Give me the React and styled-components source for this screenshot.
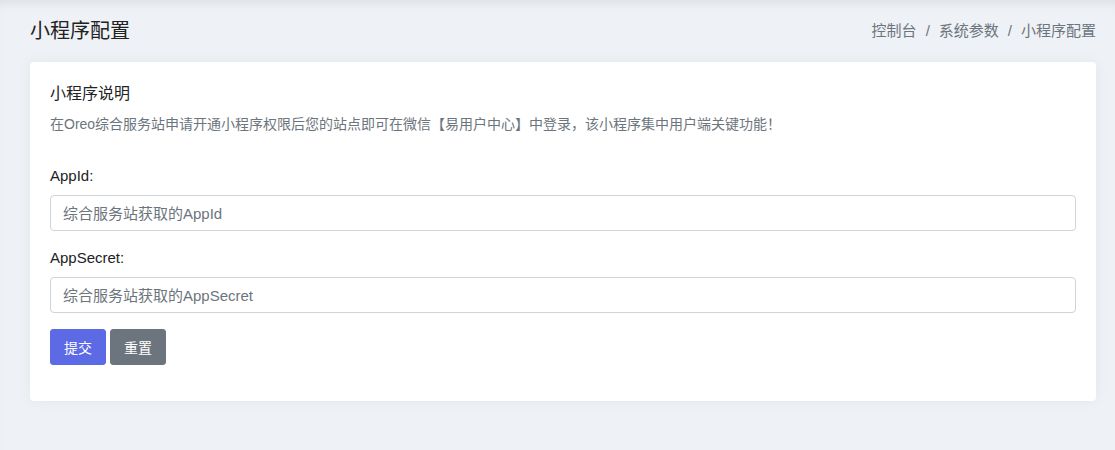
import React from 'react';
import styled, { createGlobalStyle } from 'styled-components';

const GlobalStyle = createGlobalStyle`
  html, body {
    margin: 0;
    padding: 0;
    background: #eef1f5;
  }
  body {
    font-family: "Liberation Sans", "Noto Sans CJK SC", sans-serif;
    color: #212529;
  }
  * {
    box-sizing: border-box;
  }
`;

const Page = styled.div`
  min-height: 450px;
  padding: 0 19px 0 30px;
  background: #eef1f5;
  box-shadow: inset 0 10px 12px -8px rgba(0, 0, 0, 0.09);
`;

const Header = styled.div`
  display: flex;
  align-items: center;
  justify-content: space-between;
  height: 62px;
`;

const Title = styled.h4`
  margin: 0;
  font-size: 20px;
  font-weight: 400;
  line-height: 30px;
  color: #222;
`;

const Crumbs = styled.ol`
  display: flex;
  margin: 0;
  padding: 0;
  list-style: none;
  font-size: 15px;
  line-height: 22px;
  color: #6c757d;
`;

const Crumb = styled.li`
  & + &::before {
    content: '/';
    padding: 0 9px;
    color: #6c757d;
  }
`;

const Card = styled.div`
  background: #fff;
  border-radius: 4px;
  padding: 20px 20px 36px;
  box-shadow: 0 0 14px rgba(30, 50, 90, 0.05);
`;

const CardTitle = styled.h5`
  margin: 0 0 8px;
  font-size: 16px;
  font-weight: 400;
  line-height: 24px;
  color: #222;
`;

const Note = styled.p`
  margin: 0 0 30px;
  font-size: 14px;
  line-height: 21px;
  color: #6c757d;
`;

const Field = styled.div`
  margin-bottom: 16px;
`;

const Label = styled.label`
  display: block;
  margin-bottom: 8px;
  font-size: 15px;
  line-height: 22px;
  color: #222;
`;

const Input = styled.input`
  display: block;
  width: 100%;
  height: 36px;
  padding: 0 12px;
  font-family: inherit;
  font-size: 15px;
  color: #495057;
  background: #fff;
  border: 1px solid #ced4da;
  border-radius: 4px;
  outline: none;

  &::placeholder {
    color: #6c757d;
  }
`;

const Actions = styled.div`
  display: flex;
  gap: 4px;
`;

const Button = styled.button`
  height: 36px;
  padding: 0 13px;
  font-family: inherit;
  font-size: 14px;
  color: #fff;
  background: ${p => (p.$variant === 'secondary' ? '#6c757d' : '#5d6ae6')};
  border: 1px solid ${p => (p.$variant === 'secondary' ? '#6c757d' : '#5d6ae6')};
  border-radius: 3px;
  cursor: pointer;
`;

const crumbs = ['控制台', '系统参数', '小程序配置'];

const fields = [
  { name: 'AppId', placeholder: '综合服务站获取的AppId' },
  { name: 'AppSecret', placeholder: '综合服务站获取的AppSecret' },
];

const App = () => (
  <>
    <GlobalStyle />
    <Page>
      <Header>
        <Title>小程序配置</Title>
        <Crumbs>
          {crumbs.map(c => (
            <Crumb key={c}>{c}</Crumb>
          ))}
        </Crumbs>
      </Header>
      <Card>
        <CardTitle>小程序说明</CardTitle>
        <Note>
          在Oreo综合服务站申请开通小程序权限后您的站点即可在微信【易用户中心】中登录，该小程序集中用户端关键功能！
        </Note>
        {fields.map(f => (
          <Field key={f.name}>
            <Label htmlFor={f.name}>{f.name}:</Label>
            <Input id={f.name} placeholder={f.placeholder} />
          </Field>
        ))}
        <Actions>
          <Button type="submit">提交</Button>
          <Button type="reset" $variant="secondary">
            重置
          </Button>
        </Actions>
      </Card>
    </Page>
  </>
);

export default App;
